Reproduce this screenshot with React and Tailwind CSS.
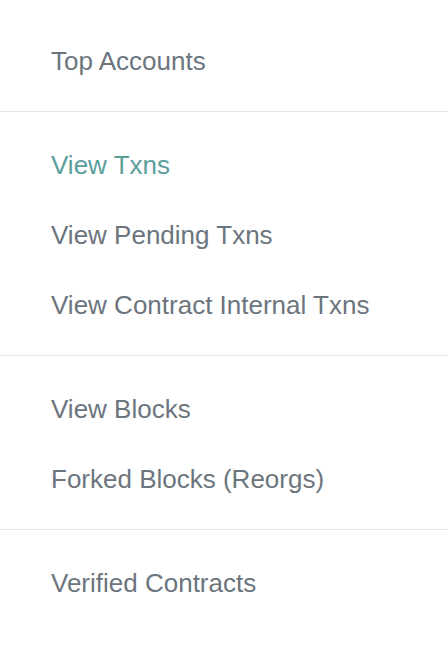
import React from 'react';

const groups = [
  [{ label: 'Top Accounts' }],
  [
    { label: 'View Txns', active: true },
    { label: 'View Pending Txns' },
    { label: 'View Contract Internal Txns' }
  ],
  [{ label: 'View Blocks' }, { label: 'Forked Blocks (Reorgs)' }],
  [{ label: 'Verified Contracts' }]
];

const App = () => {
  return (
    <div className="min-h-screen w-full bg-white pt-[26px] font-['Liberation_Sans',Arial,sans-serif]">
      {groups.map((items, gi) => (
        <div key={gi}>
          {gi > 0 && <div className="mt-[15px] mb-[18px] border-t border-[#e4e7ee]" />}
          {items.map(item => (
            <a
              key={item.label}
              href="#"
              className={`flex h-[70px] items-center pl-[51px] text-[26px] ${
                item.active ? 'text-[#5a9e9c]' : 'text-[#6c757d]'
              }`}
            >
              {item.label}
            </a>
          ))}
        </div>
      ))}
    </div>
  );
};

export default App;
